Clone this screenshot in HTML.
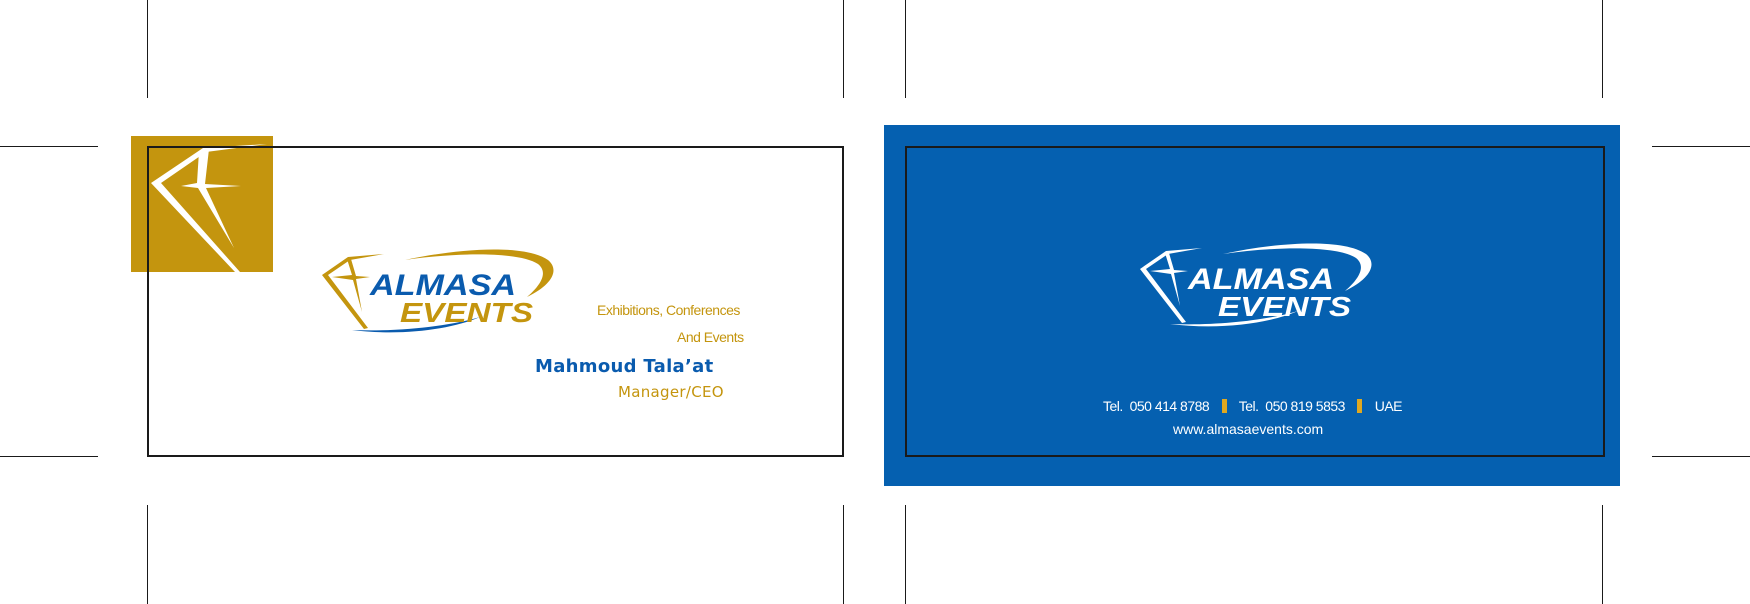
<!DOCTYPE html>
<html><head><meta charset="utf-8"><style>
html,body{margin:0;padding:0;background:#fff;}
body{width:1750px;height:604px;position:relative;overflow:hidden;font-family:"Liberation Sans",sans-serif;}
.l{position:absolute;background:#1a1a1a;}
.t{position:absolute;white-space:nowrap;}
</style></head><body>
<div class="l" style="left:147px;top:0;width:1px;height:98px"></div>
<div class="l" style="left:843px;top:0;width:1px;height:98px"></div>
<div class="l" style="left:905px;top:0;width:1px;height:98px"></div>
<div class="l" style="left:1602px;top:0;width:1px;height:98px"></div>
<div class="l" style="left:147px;top:505px;width:1px;height:99px"></div>
<div class="l" style="left:843px;top:505px;width:1px;height:99px"></div>
<div class="l" style="left:905px;top:505px;width:1px;height:99px"></div>
<div class="l" style="left:1602px;top:505px;width:1px;height:99px"></div>
<div class="l" style="left:0;top:146px;width:98px;height:1px"></div>
<div class="l" style="left:0;top:456px;width:98px;height:1px"></div>
<div class="l" style="left:1652px;top:146px;width:98px;height:1px"></div>
<div class="l" style="left:1652px;top:456px;width:98px;height:1px"></div>

<div style="position:absolute;left:131px;top:136px;width:142px;height:136px;background:#C4950E"></div>
<svg style="position:absolute;left:131px;top:136px" width="142" height="136" viewBox="0 0 142 136">
<path d="M136 8 L72 12 L20 47 L104 136 L109 136 L30 47 L75 16 Z" fill="#fff"/>
<path d="M68 15 L78 13 L74 48 L110 50 L75 52 L103 112 L67 52 L50 50 L66 47 Z" fill="#fff"/>
</svg>
<div style="position:absolute;left:147px;top:146px;width:693px;height:307px;border:2px solid #1a1a1a"></div>

<svg style="position:absolute;left:320px;top:240px" width="240" height="100" viewBox="0 0 240 100">
<path d="M85 20 C140 8 205 4 228 20 C240 30 232 45 207 57 C222 44 228 32 218 24 C200 12 140 12 85 20 Z" fill="#C4950E"/>
<path d="M2 35 L28 17 L64 14 L30 20 L8 35 L48 88 L44 89 Z" fill="#C4950E"/>
<path d="M27 19 L31 19 L36 36 L50 37 L36 39 L42 72 L33 40 L12 37 L32 35 Z" fill="#C4950E"/>
<path d="M32 90 C80 92 130 86 160 77 C130 90 80 96 32 90 Z" fill="#0A5BAE"/>
<text x="50" y="55" font-family="Liberation Sans" font-weight="bold" font-style="italic" font-size="30" fill="#0A5BAE" textLength="146" lengthAdjust="spacingAndGlyphs">ALMASA</text>
<text x="80" y="82" font-family="Liberation Sans" font-weight="bold" font-style="italic" font-size="28" fill="#C4950E" textLength="133" lengthAdjust="spacingAndGlyphs">EVENTS</text>
</svg>

<div class="t" style="left:597px;top:302px;font-size:14px;color:#C4950E;letter-spacing:-0.5px">Exhibitions, Conferences</div>
<div class="t" style="left:677px;top:329px;font-size:14px;color:#C4950E;letter-spacing:-0.5px">And Events</div>
<div class="t" style="left:535px;top:356px;font-family:'DejaVu Sans',sans-serif;font-size:18px;font-weight:bold;color:#0A5BAE;letter-spacing:0.3px">Mahmoud Tala’at</div>
<div class="t" style="left:618px;top:383px;font-family:'DejaVu Sans',sans-serif;font-size:15px;color:#C4950E;letter-spacing:0.3px">Manager/CEO</div>

<div style="position:absolute;left:884px;top:125px;width:736px;height:361px;background:#0560B0"></div>
<div style="position:absolute;left:905px;top:146px;width:696px;height:307px;border:2px solid #1a1a1a"></div>
<svg style="position:absolute;left:1138px;top:234px" width="240" height="100" viewBox="0 0 240 100">
<path d="M85 20 C140 8 205 4 228 20 C240 30 232 45 207 57 C222 44 228 32 218 24 C200 12 140 12 85 20 Z" fill="#fff"/>
<path d="M2 35 L28 17 L64 14 L30 20 L8 35 L48 88 L44 89 Z" fill="#fff"/>
<path d="M27 19 L31 19 L36 36 L50 37 L36 39 L42 72 L33 40 L12 37 L32 35 Z" fill="#fff"/>
<path d="M32 90 C80 92 130 86 160 77 C130 90 80 96 32 90 Z" fill="#fff"/>
<text x="50" y="55" font-family="Liberation Sans" font-weight="bold" font-style="italic" font-size="30" fill="#fff" textLength="146" lengthAdjust="spacingAndGlyphs">ALMASA</text>
<text x="80" y="82" font-family="Liberation Sans" font-weight="bold" font-style="italic" font-size="28" fill="#fff" textLength="133" lengthAdjust="spacingAndGlyphs">EVENTS</text>
</svg>
<div class="t" style="left:1103px;top:398px;font-size:14px;color:#fff;letter-spacing:-0.5px">Tel.&nbsp; 050 414 8788 <span style="display:inline-block;width:5px;height:14px;background:#E0A820;vertical-align:-2px;margin:0 9px"></span> Tel.&nbsp; 050 819 5853 <span style="display:inline-block;width:5px;height:14px;background:#E0A820;vertical-align:-2px;margin:0 9px"></span> UAE</div>
<div class="t" style="left:1173px;top:421px;font-size:14px;color:#fff">www.almasaevents.com</div>
</body></html>
